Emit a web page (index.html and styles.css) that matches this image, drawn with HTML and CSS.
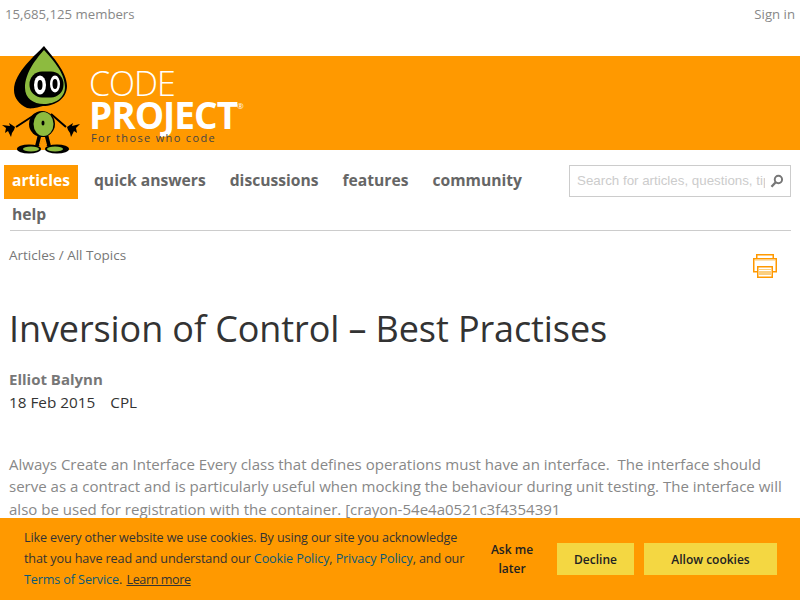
FILE: index.html
```html
<!DOCTYPE html>
<html lang="en">
<head>
    <meta charset="UTF-8">
    <title>Inversion of Control – Best Practises</title>
    <link rel="stylesheet" href="styles.css">
</head>
<body>
<div class="topbar">
    <span>15,685,125 members</span>
    <a href="#">Sign in</a>
</div>
<div class="banner">
    <svg class="mascot" viewBox="0 40 90 120" width="90" height="120">
        <path d="M2 125l8 1-1-3 6 4-1 3-2 3-1 4-3-6-3 2 1-5z" fill="#000"/>
        <path d="M80 124l-8 2 1-3-6 4 1 3 2 3 1 4 3-6 3 2-1-5z" fill="#000"/>
        <path d="M36 114L16 127M51 114L66 127" stroke="#000" stroke-width="2" fill="none"/>
        <path d="M38 134l-3 12h4l4-8 4 8h4l-3-12z" fill="#000"/>
        <path d="M41 137l-2 8 1 0 3-6 3 6 1 0-2-8z" fill="#f90"/>
        <ellipse cx="29" cy="149" rx="12" ry="4.500" fill="#000"/>
        <ellipse cx="57" cy="149" rx="12" ry="4.500" fill="#000"/>
        <ellipse cx="31" cy="149" rx="8" ry="2.500" fill="#8dbb3f"/>
        <ellipse cx="55" cy="149" rx="8" ry="2.500" fill="#8dbb3f"/>
        <ellipse cx="42" cy="124" rx="13" ry="13" fill="#000"/>
        <ellipse cx="43.500" cy="124" rx="10" ry="12" fill="#8dbb3f"/>
        <ellipse cx="43" cy="123" rx="1.500" ry="2.500" fill="#000"/>
        <path d="M44 46C37 54 14 72 14 90c0 8 5 14 13 18 5 1 8 0 16-2 13 0 24-8 24-20C67 72 52 56 44 46z" fill="#000"/>
        <path d="M44 50C37 58 25 72 25 88c0 10 8 16 19 16s21-6 21-17C65 72 51 58 44 50z" fill="#8dbb3f"/>
        <rect x="29.500" y="71.500" width="34" height="26" rx="12.500" fill="#000"/>
        <ellipse cx="40" cy="85" rx="6" ry="9.500" fill="#fff"/>
        <ellipse cx="55" cy="84" rx="5" ry="8.500" fill="#fff"/>
        <ellipse cx="40" cy="85" rx="2.500" ry="5" fill="#000"/>
        <ellipse cx="55" cy="84" rx="2.500" ry="5" fill="#000"/>
    </svg>
    <div class="wordmark">
        <div class="word-code">CODE</div>
        <div class="word-project">PROJECT<sup>®</sup></div>
        <div class="word-tag">For those who code</div>
    </div>
</div>
<div class="menu">
    <ul class="nav">
        <li class="nav-selected">articles</li>
        <li>quick answers</li>
        <li>discussions</li>
        <li>features</li>
        <li>community</li>
        <li>help</li>
    </ul>
    <div class="search">
        <input type="text" placeholder="Search for articles, questions, tips">
        <svg viewBox="0 0 14 14" width="14" height="14">
            <circle cx="8.500" cy="5.500" r="3.700" fill="none" stroke="#777" stroke-width="2"/>
            <path d="M5.800 8.300L1.500 12.800" stroke="#777" stroke-width="2.400"/>
        </svg>
    </div>
</div>
<div class="crumbs">
    <span>Articles / All Topics</span>
    <svg class="print" viewBox="0 0 24 24" width="24" height="24">
        <path d="M3.750 .75h16.500v6h-16.500z" fill="#fff" stroke="#f90" stroke-width="1.500"/>
        <path d="M.75 4.750h22.500v13h-22.500z" fill="#fff" stroke="#f90" stroke-width="1.500"/>
        <path d="M4.750 12.750h14.500v10.500H4.750z" fill="#fff" stroke="#f90" stroke-width="1.500"/>
        <path d="M6 15h12v1H6zM6 17h12v4H6z" fill="#fbcf80"/>
        <path d="M2 6h20v1H2z" fill="#fde3b3"/>
    </svg>
</div>
<h1 class="title">Inversion of Control – Best Practises</h1>
<div class="author">Elliot Balynn</div>
<div class="meta"><span>18 Feb 2015</span><span>CPL</span></div>
<p class="body-text">Always Create an Interface Every class that defines operations must have an interface.&nbsp; The interface should serve as a contract and is particularly useful when mocking the behaviour during unit testing. The interface will also be used for registration with the container. [crayon-54e4a0521c3f4354391</p>
<div class="cookie">
    <p class="cookie-text">Like every other website we use cookies. By using our site you acknowledge that you have read and understand our <a href="#">Cookie Policy</a>, <a href="#">Privacy Policy</a>, and our <a href="#">Terms of Service</a>.&nbsp; <a href="#" class="learn">Learn more</a></p>
    <span class="later">Ask me later</span>
    <button class="btn-decline">Decline</button>
    <button class="btn-allow">Allow cookies</button>
</div>
</body>
</html>
```

FILE: styles.css
```css
*{
    margin: 0;
    padding: 0;
    box-sizing: border-box;
}
body{
    font-family: "Open Sans", "Noto Sans", sans-serif;
    color: #777;
    background-color: #fff;
}
li{
    list-style: none;
}
.topbar{
    display: flex;
    justify-content: space-between;
    height: 56px;
    padding: 5px 5px 0;
    font-size: 13.200px;
    line-height: 18px;
    color: #888;
}
.topbar a{
    color: #888;
    text-decoration: none;
}
.banner{
    display: flex;
    height: 94px;
    background-color: #f90;
}
.mascot{
    flex: none;
    margin-top: -16px;
}
.wordmark{
    margin-left: -1px;
    padding-top: 11px;
    color: #fff;
}
.word-code{
    font-size: 34px;
    font-weight: 300;
    line-height: 33px;
    letter-spacing: -1px;
}
.word-project{
    font-size: 37px;
    font-weight: 700;
    line-height: 29px;
    letter-spacing: -1px;
}
.word-project sup{
    font-size: 8px;
    font-weight: 400;
    letter-spacing: 0;
    vertical-align: 20px;
    line-height: 0;
}
.word-tag{
    margin: 2px 0 0 2px;
    font-size: 11px;
    line-height: 14px;
    letter-spacing: 1.350px;
    color: #444;
}
.menu{
    display: flex;
    justify-content: space-between;
    align-items: flex-start;
    height: 81px;
    margin: 0 9px 0 10px;
    padding-top: 15px;
    border-bottom: 1px solid #ccc;
}
.nav{
    display: flex;
    flex-wrap: wrap;
    width: 540px;
    margin-left: -6px;
}
.nav li{
    height: 34px;
    padding: 0 8px;
    margin-right: 8px;
    font-size: 15.650px;
    font-weight: 700;
    line-height: 30px;
    color: #666;
}
.nav .nav-selected{
    background-color: #f90;
    color: #fff;
}
.search{
    display: flex;
    align-items: center;
    width: 222px;
    height: 32px;
    padding: 0 6px 2px 7px;
    border: 1px solid #ccc;
}
.search input{
    width: 190px;
    border: none;
    outline: none;
    font-family: "Liberation Sans", sans-serif;
    font-size: 13.333px;
}
.search input::placeholder{
    color: #ccc;
}
.search svg{
    margin: 2px 0 0 5px;
}
.crumbs{
    display: flex;
    justify-content: space-between;
    padding: 14px 23px 0 9px;
    height: 75px;
    font-size: 13.500px;
    line-height: 20px;
    color: #777;
}
.print{
    margin-top: 9px;
}
.title{
    padding-left: 9px;
    font-size: 36px;
    font-weight: 400;
    line-height: 46px;
    letter-spacing: -.1px;
    color: #333;
}
.author{
    margin-top: 16px;
    padding-left: 9px;
    font-size: 15px;
    font-weight: 700;
    line-height: 22px;
    color: #777;
}
.meta{
    display: flex;
    gap: 15px;
    padding-left: 9px;
    font-size: 15.300px;
    line-height: 24px;
    color: #333;
}
.body-text{
    margin-top: 39px;
    padding: 0 9px;
    font-size: 15.040px;
    line-height: 22.400px;
    color: #888;
}
.cookie{
    position: fixed;
    left: 0;
    right: 0;
    bottom: 0;
    display: flex;
    align-items: flex-start;
    height: 82px;
    padding: 0 23px 0 24px;
    background-color: #f90;
    color: #333;
}
.cookie-text{
    flex: none;
    width: 450px;
    margin-top: 9px;
    font-size: 12.600px;
    line-height: 21px;
    letter-spacing: -.12px;
}
.cookie-text a{
    color: #0a5a78;
    text-decoration: none;
}
.cookie-text .learn{
    margin-left: -2px;
    color: #333;
    text-decoration: underline;
    letter-spacing: -.4px;
}
.later{
    flex: none;
    width: 50px;
    margin: 22px 20px 0 13px;
    font-size: 12px;
    font-weight: 600;
    line-height: 19px;
    text-align: center;
    color: #222;
}
button{
    flex: none;
    height: 32px;
    margin-top: 25px;
    border: none;
    background-color: #f4d742;
    font-family: "Open Sans", sans-serif;
    font-size: 12px;
    font-weight: 600;
    color: #222;
}
.btn-decline{
    width: 77px;
    margin-right: 10px;
}
.btn-allow{
    width: 133px;
}
```
